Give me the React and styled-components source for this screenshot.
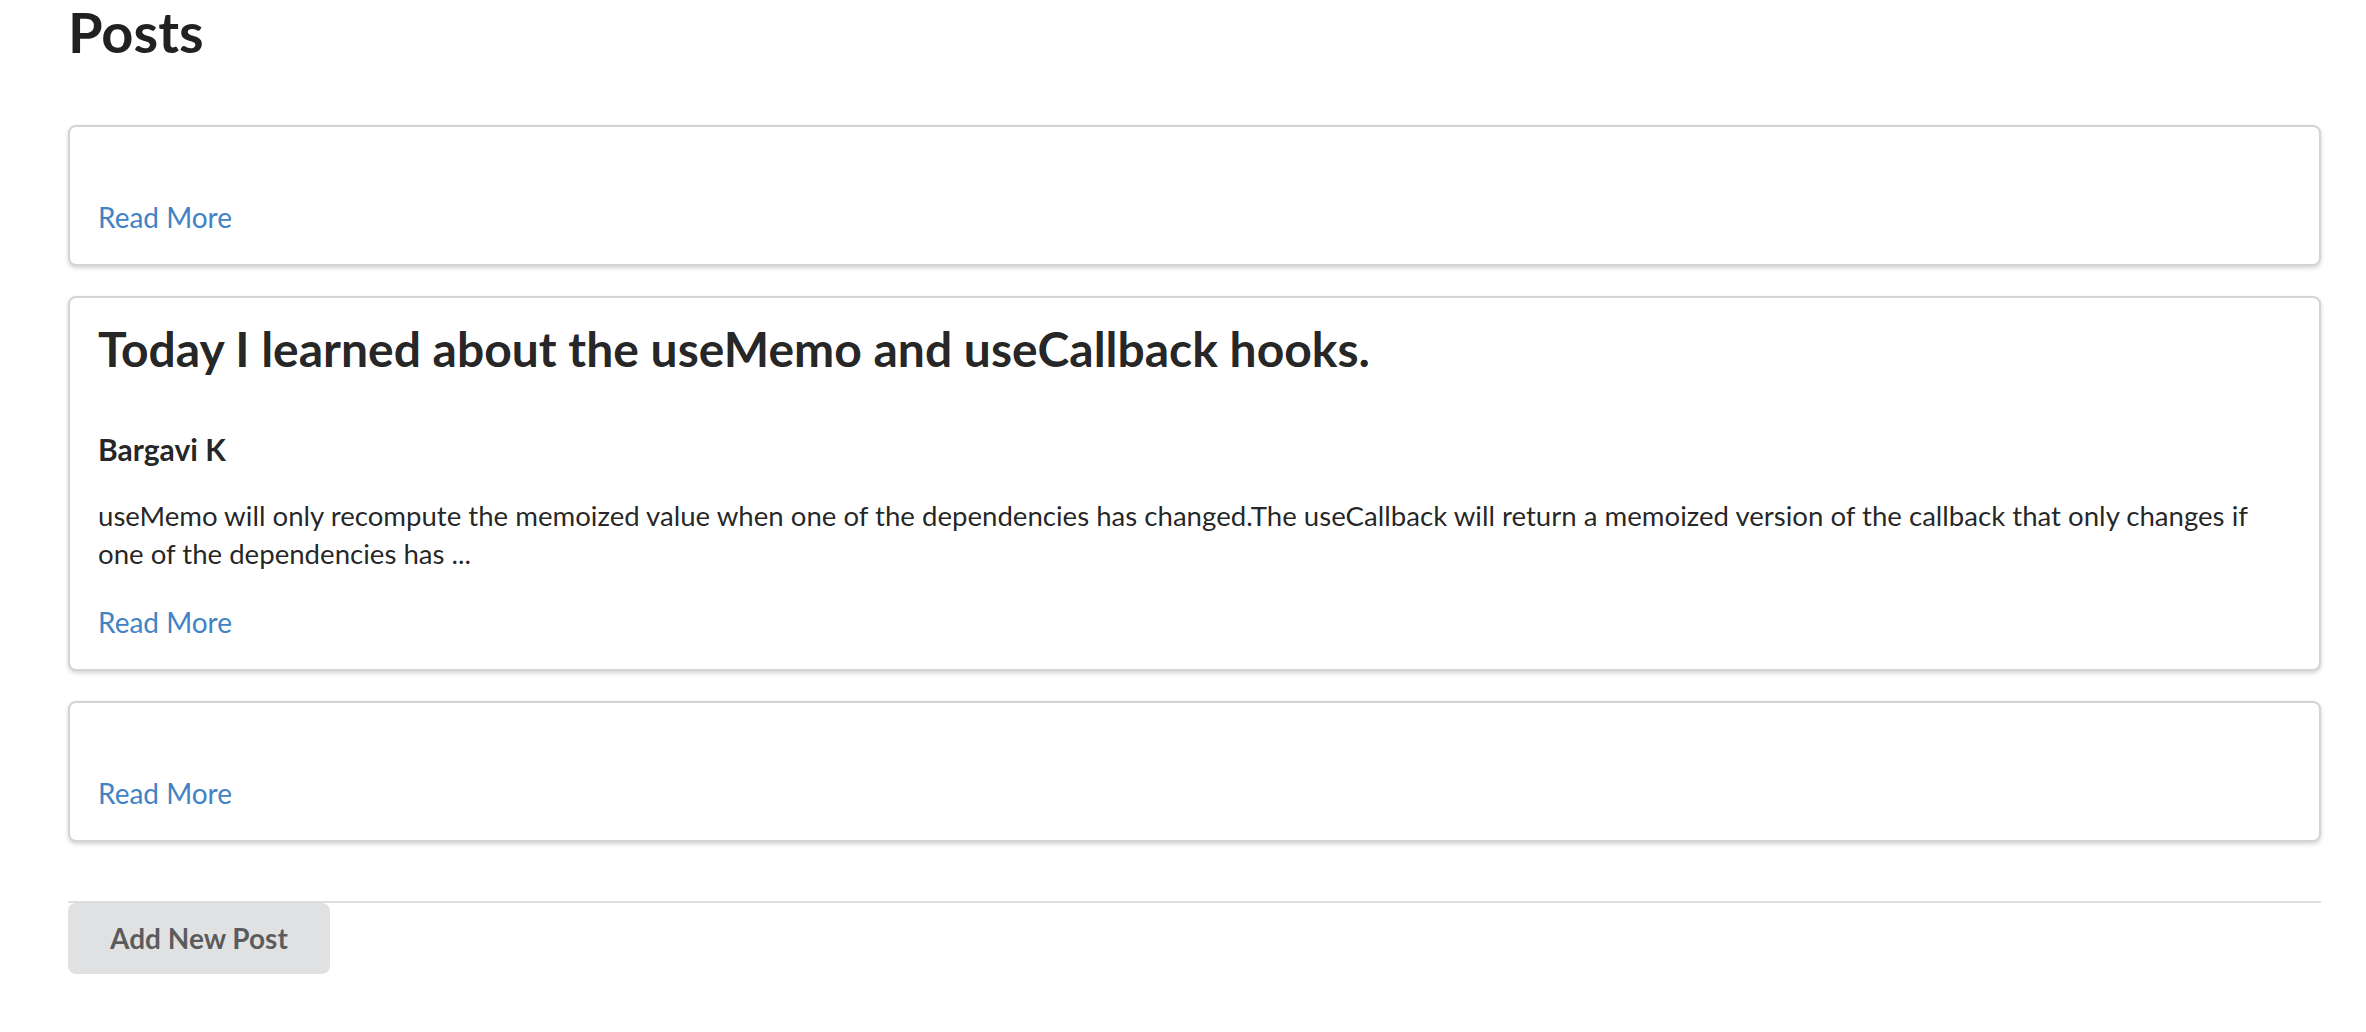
import React from "react";
import styled, { createGlobalStyle } from "styled-components";

const GlobalStyle = createGlobalStyle`
  html, body {
    margin: 0;
    padding: 0;
    background: #fff;
  }
  body {
    font-family: Lato, "Helvetica Neue", Arial, sans-serif;
    font-size: 28px;
    color: rgba(0, 0, 0, 0.87);
  }
`;

const posts = [
  { id: 1 },
  {
    id: 2,
    title: "Today I learned about the useMemo and useCallback hooks.",
    author: "Bargavi K",
    body:
      "useMemo will only recompute the memoized value when one of the dependencies has changed.The useCallback will return a memoized version of the callback that only changes if one of the dependencies has ...",
  },
  { id: 3 },
];

function App() {
  return (
    <>
      <GlobalStyle />
      <Page>
        <Heading>Posts</Heading>
        <CardList>
          {posts.map((post) => (
            <Card key={post.id}>
              {post.title ? (
                <>
                  <Title>{post.title}</Title>
                  <Author>{post.author}</Author>
                  <Excerpt>{post.body}</Excerpt>
                </>
              ) : (
                <Blank />
              )}
              <ReadMore href="#">Read More</ReadMore>
            </Card>
          ))}
        </CardList>
        <Footer>
          <Button type="button">Add New Post</Button>
        </Footer>
      </Page>
    </>
  );
}

export default App;

const Page = styled.div`
  padding: 0 45px 40px 68px;
`;

const Heading = styled.h1`
  margin: 0 0 61px;
  font-size: 56px;
  line-height: 64px;
  font-weight: 700;
  color: rgba(0, 0, 0, 0.87);
`;

const CardList = styled.div`
  display: flex;
  flex-direction: column;
  gap: 30px;
`;

const Card = styled.div`
  display: flex;
  flex-direction: column;
  padding: 28px 28px;
  border: 2px solid #d4d4d5;
  border-radius: 8px;
  background: #fff;
  box-shadow: 0 2px 4px 0 #d4d4d5;
`;

const Blank = styled.div`
  height: 43px;
`;

const Title = styled.h2`
  margin: 0 0 59px;
  font-size: 48px;
  line-height: 46px;
  font-weight: 700;
  color: rgba(0, 0, 0, 0.87);
`;

const Author = styled.h4`
  margin: 0 0 30px;
  font-size: 30px;
  line-height: 36px;
  font-weight: 700;
  color: rgba(0, 0, 0, 0.87);
`;

const Excerpt = styled.p`
  margin: 0 0 30px;
  font-size: 27.6px;
  line-height: 38px;
  color: rgba(0, 0, 0, 0.87);
`;

const ReadMore = styled.a`
  align-self: flex-start;
  font-size: 28px;
  line-height: 38px;
  color: #4183c4;
  text-decoration: none;
`;

const Footer = styled.div`
  margin-top: 59px;
  border-top: 2px solid #dedede;
`;

const Button = styled.button`
  display: inline-block;
  margin: 0;
  padding: 22px 42px;
  border: none;
  border-radius: 8px;
  background: #e0e1e2;
  font-family: Lato, "Helvetica Neue", Arial, sans-serif;
  font-size: 28px;
  line-height: 27px;
  font-weight: 700;
  color: rgba(0, 0, 0, 0.6);
  cursor: pointer;
`;
